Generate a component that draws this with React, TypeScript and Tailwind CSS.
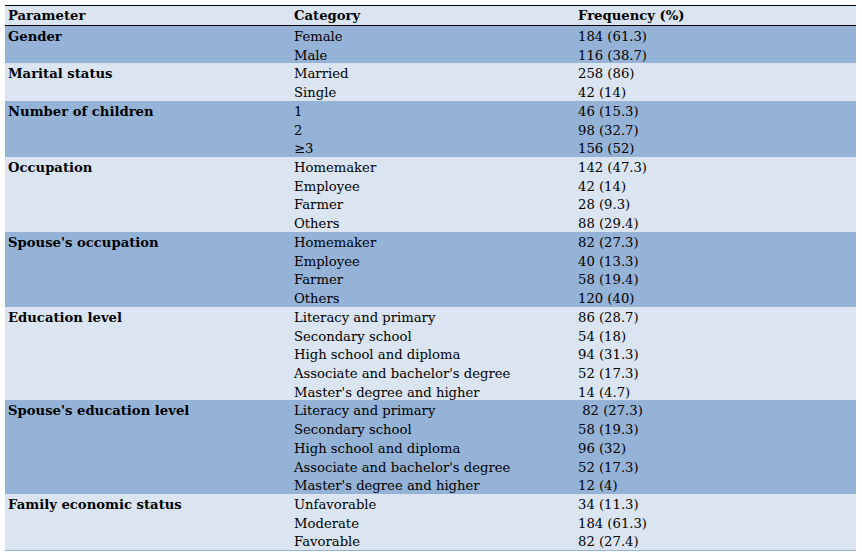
const groups: { param: string; dark: boolean; items: [string, string][] }[] = [
  { param: "Gender", dark: true, items: [["Female", "184 (61.3)"], ["Male", "116 (38.7)"]] },
  { param: "Marital status", dark: false, items: [["Married", "258 (86)"], ["Single", "42 (14)"]] },
  {
    param: "Number of children",
    dark: true,
    items: [["1", "46 (15.3)"], ["2", "98 (32.7)"], ["≥3", "156 (52)"]],
  },
  {
    param: "Occupation",
    dark: false,
    items: [
      ["Homemaker", "142 (47.3)"],
      ["Employee", "42 (14)"],
      ["Farmer", "28 (9.3)"],
      ["Others", "88 (29.4)"],
    ],
  },
  {
    param: "Spouse's occupation",
    dark: true,
    items: [
      ["Homemaker", "82 (27.3)"],
      ["Employee", "40 (13.3)"],
      ["Farmer", "58 (19.4)"],
      ["Others", "120 (40)"],
    ],
  },
  {
    param: "Education level",
    dark: false,
    items: [
      ["Literacy and primary", "86 (28.7)"],
      ["Secondary school", "54 (18)"],
      ["High school and diploma", "94 (31.3)"],
      ["Associate and bachelor's degree", "52 (17.3)"],
      ["Master's degree and higher", "14 (4.7)"],
    ],
  },
  {
    param: "Spouse's education level",
    dark: true,
    items: [
      ["Literacy and primary", "\u00a082 (27.3)"],
      ["Secondary school", "58 (19.3)"],
      ["High school and diploma", "96 (32)"],
      ["Associate and bachelor's degree", "52 (17.3)"],
      ["Master's degree and higher", "12 (4)"],
    ],
  },
  {
    param: "Family economic status",
    dark: false,
    items: [
      ["Unfavorable", "34 (11.3)"],
      ["Moderate", "184 (61.3)"],
      ["Favorable", "82 (27.4)"],
    ],
  },
];

const line = "h-[18.72px] pt-[3px] leading-[15.7px] pl-[3px] whitespace-pre";

export default function App() {
  return (
    <div className="w-[862px] h-[552px] bg-white pt-[5px] pl-[5px] font-['DejaVu_Serif',serif] text-[13.2px] text-black">
      <div className="w-[851px] border-t border-black border-b-[1.5px] border-b-[#95b3d7]">
        <div className="grid grid-cols-[286px_284px_281px] bg-[#dbe5f1] border-b border-black h-[20px] leading-[20px] font-bold">
          <div className="pl-[3px]">Parameter</div>
          <div className="pl-[3px]">Category</div>
          <div className="pl-[3px]">Frequency (%)</div>
        </div>
        {groups.map((g) => (
          <div
            key={g.param}
            className={`grid grid-cols-[286px_284px_281px] ${
              g.dark ? "bg-[#95b3d7]" : "bg-[#dbe5f1]"
            }`}
          >
            <div className={`${line} font-bold`}>{g.param}</div>
            <div>
              {g.items.map(([c]) => (
                <div key={c} className={line}>
                  {c}
                </div>
              ))}
            </div>
            <div>
              {g.items.map(([c, f]) => (
                <div key={c} className={line}>
                  {f}
                </div>
              ))}
            </div>
          </div>
        ))}
      </div>
    </div>
  );
}
